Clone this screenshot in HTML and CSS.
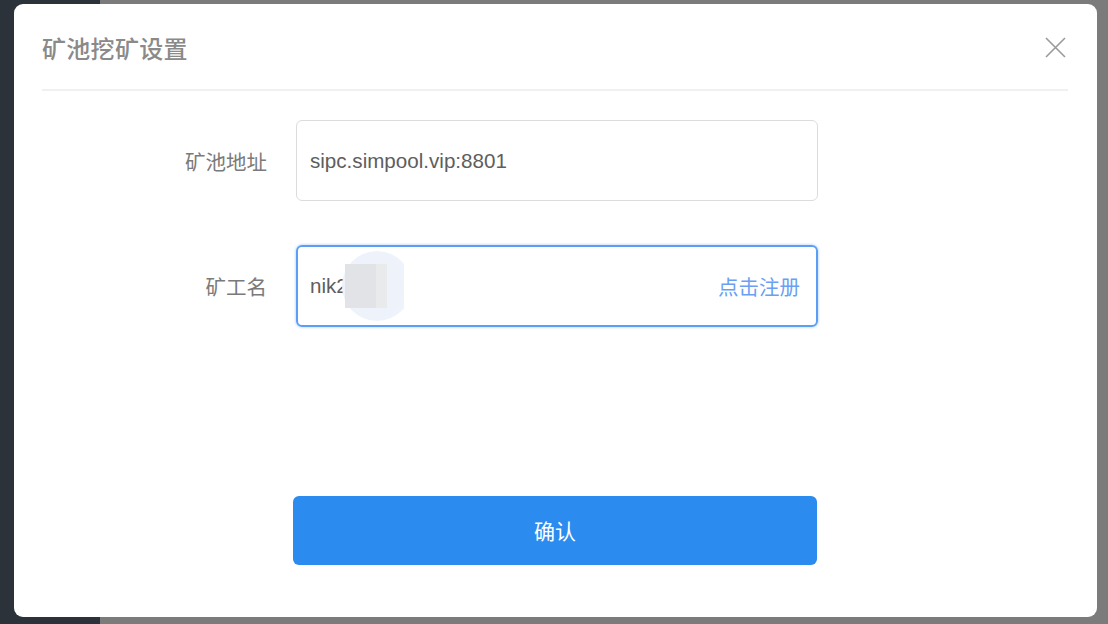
FILE: index.html
```html
<!DOCTYPE html>
<html lang="zh-CN">
<head>
<meta charset="utf-8">
<title>矿池挖矿设置</title>
<link rel="stylesheet" href="styles.css">
</head>
<body>
<div class="modal">
  <div class="modal-header">
    <h2 class="modal-title">矿池挖矿设置</h2>
    <button class="close-btn" aria-label="关闭">
      <svg width="21" height="21" viewBox="0 0 21 21"><path d="M1 1 L20 20 M20 1 L1 20" stroke="#9a9a9a" stroke-width="1.6" fill="none"/></svg>
    </button>
  </div>
  <div class="form">
    <div class="form-row">
      <label class="form-label">矿池地址</label>
      <div class="field">
        <span class="field-value">sipc.simpool.vip:8801</span>
      </div>
    </div>
    <div class="form-row">
      <label class="form-label">矿工名</label>
      <div class="field field-focus">
        <span class="field-value">nik2</span>
        <span class="redact-circle"></span>
        <span class="redact-rect"></span>
        <a class="field-link" href="#">点击注册</a>
      </div>
    </div>
  </div>
  <div class="actions">
    <button class="confirm-btn">确认</button>
  </div>
</div>
</body>
</html>
```

FILE: styles.css
```css
html, body {
  margin: 0;
  padding: 0;
}
body {
  width: 1108px;
  height: 624px;
  overflow: hidden;
  background: linear-gradient(to right, #2b323a 0, #2b323a 100px, #7b7b7b 100px, #7b7b7b 100%);
  font-family: "Liberation Sans", "Noto Sans CJK SC", sans-serif;
  padding-top: 4px;
  box-sizing: border-box;
}
.modal {
  margin-left: 14px;
  width: 1083px;
  height: 613px;
  background: #fff;
  border-radius: 9px;
  box-sizing: border-box;
  padding: 0 29px 0 28px;
  display: flex;
  flex-direction: column;
}
.modal-header {
  height: 85px;
  border-bottom: 2px solid #f0f0f0;
  display: flex;
  align-items: center;
  justify-content: space-between;
}
.modal-title {
  margin: 0;
  font-family: "Noto Sans CJK SC", sans-serif;
  font-size: 24px;
  font-weight: 500;
  color: #8a8a8a;
  padding-top: 1px;
  letter-spacing: 0.3px;
}
.close-btn {
  border: 0;
  background: none;
  padding: 0;
  margin-right: 2px;
  width: 21px;
  height: 21px;
  display: flex;
  margin-top: 2px;
}
.form {
  padding-top: 29px;
  display: flex;
  flex-direction: column;
  gap: 44px;
}
.form-row {
  display: flex;
  align-items: center;
}
.form-label {
  width: 254px;
  text-align: right;
  padding-right: 29px;
  box-sizing: border-box;
  font-family: "Noto Sans CJK SC", sans-serif;
  font-size: 20.5px;
  color: #7a7a7a;
}
.field {
  position: relative;
  width: 522px;
  height: 81px;
  box-sizing: border-box;
  border: 1.5px solid #dcdcdc;
  border-radius: 6px;
  display: flex;
  align-items: center;
  padding: 0 16px 0 13px;
}
.field-focus {
  height: 82px;
  border: 2px solid #5c9ef3;
  box-shadow: 0 0 3px rgba(92, 158, 243, 0.6);
  padding-left: 12px;
}
.field-value {
  font-size: 20.6px;
  color: #5e5e5e;
}
.field-link {
  margin-left: auto;
  font-family: "Noto Sans CJK SC", sans-serif;
  font-size: 20.5px;
  color: #6b9ff3;
  text-decoration: none;
}
.redact-circle {
  position: absolute;
  left: 44px;
  top: 4px;
  width: 70px;
  height: 70px;
  border-radius: 50%;
  background: radial-gradient(circle at 40% 50%, #eef2f8 0, #eef3fb 60%, #f1f5fc 100%);
  clip-path: inset(0 8px 0 0);
}
.redact-rect {
  position: absolute;
  left: 47px;
  top: 17px;
  width: 42px;
  height: 44px;
  background: linear-gradient(to right, #e2e3e6 0, #e2e3e6 75%, #e9eaec 75%);
}
.actions {
  margin-top: 169px;
  padding-left: 251px;
}
.confirm-btn {
  width: 524px;
  height: 69px;
  border: 0;
  border-radius: 6px;
  background: #2b8bef;
  color: #fff;
  font-family: "Noto Sans CJK SC", sans-serif;
  font-size: 21px;
  padding-bottom: 3px;
  cursor: pointer;
}
```
